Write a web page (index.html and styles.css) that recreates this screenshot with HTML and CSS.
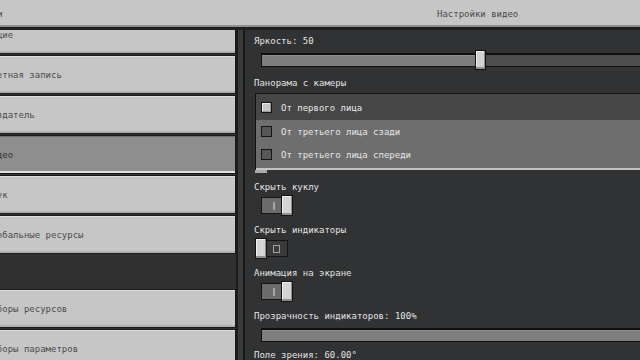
FILE: index.html
```html
<!DOCTYPE html>
<html lang="ru">
<head>
<meta charset="utf-8">
<title>Настройки видео</title>
<link rel="stylesheet" href="styles.css">
</head>
<body>
<div class="screen">
  <header class="topbar">
    <span class="topbar-back">Настройки</span>
    <span class="topbar-title">Настройки видео</span>
  </header>
  <main class="layout">
    <nav class="sidebar">
      <div class="nav-list">
        <div class="nav-group">
          <div class="nav-btn">Общие</div>
          <div class="nav-btn">Учетная запись</div>
          <div class="nav-btn">Создатель</div>
          <div class="nav-btn is-active">Видео</div>
          <div class="nav-btn">Звук</div>
          <div class="nav-btn">Глобальные ресурсы</div>
        </div>
        <div class="nav-group">
          <div class="nav-btn">Наборы ресурсов</div>
          <div class="nav-btn">Наборы параметров</div>
        </div>
      </div>
    </nav>
    <div class="rail"></div>
    <section class="panel">
      <div class="label">Яркость: 50</div>
      <div class="slider">
        <div class="slider-track"><div class="slider-fill" style="width: 214px"></div></div>
        <div class="slider-thumb" style="left: 214px"></div>
      </div>

      <div class="label label-gap">Панорама с камеры</div>
      <div class="dropdown">
        <div class="dd-row is-current"><span class="radio is-checked"></span><span>От первого лица</span></div>
        <div class="dd-list">
          <div class="dd-row"><span class="radio"></span><span>От третьего лица сзади</span></div>
          <div class="dd-row"><span class="radio"></span><span>От третьего лица спереди</span></div>
        </div>
      </div>
      <div class="dd-peek"></div>

      <div class="label label-gap-s">Скрыть куклу</div>
      <div class="toggle is-on">
        <div class="toggle-track"><span class="mark-on"></span></div>
        <div class="toggle-thumb"></div>
      </div>

      <div class="label">Скрыть индикаторы</div>
      <div class="toggle is-off">
        <div class="toggle-track"><span class="mark-off"></span></div>
        <div class="toggle-thumb"></div>
      </div>

      <div class="label">Анимация на экране</div>
      <div class="toggle is-on">
        <div class="toggle-track"><span class="mark-on"></span></div>
        <div class="toggle-thumb"></div>
      </div>

      <div class="label">Прозрачность индикаторов: 100%</div>
      <div class="slider">
        <div class="slider-track"><div class="slider-fill" style="width: 100%"></div></div>
        <div class="slider-thumb" style="left: 420px"></div>
      </div>

      <div class="label label-gap-xs">Поле зрения: 60.00°</div>
    </section>
  </main>
</div>
</body>
</html>
```

FILE: styles.css
```css
* {
  box-sizing: border-box;
  margin: 0;
  padding: 0;
}

html, body {
  width: 640px;
  height: 360px;
  overflow: hidden;
  background: #313233;
}

body {
  font-family: "DejaVu Sans Mono", "Liberation Mono", monospace;
  font-size: 9px;
  line-height: 12px;
}

.screen {
  width: 640px;
  height: 360px;
  display: flex;
  flex-direction: column;
}

/* header */
.topbar {
  display: flex;
  align-items: center;
  height: 27px;
  flex: none;
  padding-top: 2px;
  background: #c6c6c6;
  border-bottom: 2px solid #8e8e8e;
  color: #4a4a4a;
  white-space: nowrap;
}

.topbar-back {
  margin-left: -46px;
  width: 49px;
  flex: none;
}

.topbar-title {
  margin-left: 434px;
}

/* main area */
.layout {
  flex: 1;
  display: flex;
  min-height: 0;
  border-top: 3px solid #202020;
}

.sidebar {
  width: 238px;
  flex: none;
  background: #313131;
  border-right: 2px solid #1b1b1b;
  overflow: hidden;
}

.nav-list {
  margin-top: -15px;
  margin-left: -40px;
}

.nav-group {
  display: flex;
  flex-direction: column;
  gap: 1px;
}

.nav-group + .nav-group {
  margin-top: 35px;
}

.nav-btn {
  height: 39px;
  display: flex;
  align-items: center;
  padding-left: 25px;
  padding-top: 1px;
  background: #c6c6c6;
  border: 1px solid #1a1a1a;
  box-shadow: inset 0 1px #dedede, inset 0 -2px #b0b0b0;
  color: #4c4c4c;
  white-space: nowrap;
}

.nav-btn.is-active {
  background: #8e8e8e;
  box-shadow: inset 0 1px #6e6e6e, inset 0 -2px #e2e2e2;
  color: #333;
}

.rail {
  width: 7px;
  flex: none;
  background: #3a3a3a;
  border-right: 2px solid #161616;
}

/* settings panel */
.panel {
  flex: 1;
  min-width: 0;
  overflow: hidden;
  display: flex;
  flex-direction: column;
  padding: 5px 0 0 9px;
  color: #e2e2e2;
}

.label {
  height: 12px;
  flex: none;
  white-space: nowrap;
}

.label-gap { margin-top: 7px; }
.label-gap-s { margin-top: 8px; }
.label-gap-xs { margin-top: 4px; }

.slider {
  position: relative;
  height: 20px;
  flex: none;
  margin: 3px -30px 0 7px;
}

.slider-track {
  position: absolute;
  left: 0;
  right: 0;
  top: 3px;
  height: 14px;
  background: #4d4d4d;
  border: 1px solid #101010;
  border-top-width: 2px;
}

.slider-fill {
  height: 100%;
  background: #7e7e7e;
  box-shadow: inset 0 1px #8e8e8e;
}

.slider-thumb {
  position: absolute;
  top: 0;
  width: 11px;
  height: 20px;
  background: #d2d2d2;
  border: 1px solid #111;
  box-shadow: inset -1px -2px #8e8e8e, inset 1px 1px #efefef;
}

/* dropdown */
.dropdown {
  flex: none;
  margin: 4px -30px 0 1px;
  border-top: 1px solid #111;
  border-left: 1px solid #111;
}

.dd-row {
  display: flex;
  align-items: center;
  gap: 9px;
  height: 23px;
  padding-left: 5px;
  white-space: nowrap;
  color: #e6e6e6;
}

.dd-row.is-current {
  height: 26px;
  padding-top: 1px;
  background: #474747;
}

.dd-list {
  background: #6e6e6e;
  padding-bottom: 2px;
  border-bottom: 2px solid #c4c4c4;
}

.radio {
  width: 11px;
  height: 11px;
  flex: none;
  background: #585858;
  border: 1px solid #161616;
}

.radio.is-checked {
  background: #c8c8c8;
  box-shadow: inset -1px -1px #9a9a9a, inset 1px 1px #ececec;
}

.dd-peek {
  width: 12px;
  height: 3px;
  flex: none;
  margin-left: 1px;
  background: #a9a9a9;
}

/* toggles */
.toggle {
  position: relative;
  width: 38px;
  height: 21px;
  flex: none;
  margin: 2px 0 8px 1px;
}

.toggle-track {
  position: absolute;
  top: 2px;
  height: 17px;
  display: flex;
  align-items: center;
  background: #6b6b6b;
  border: 1px solid #141414;
}

.toggle.is-on .toggle-track {
  left: 6px;
  right: 0;
}

.toggle.is-off .toggle-track {
  left: 1px;
  right: 5px;
  background: #3a3a3a;
}

.toggle-thumb {
  position: absolute;
  top: 0;
  width: 12px;
  height: 21px;
  background: #d4d4d4;
  border: 1px solid #141414;
  box-shadow: inset -1px -2px #8f8f8f, inset 1px 1px #f0f0f0;
}

.toggle.is-on .toggle-thumb { right: 0; }
.toggle.is-off .toggle-thumb { left: 0; }

.mark-on {
  width: 2px;
  height: 8px;
  margin-left: 11px;
  background: #a6a6a6;
}

.mark-off {
  width: 7px;
  height: 8px;
  margin-left: 16px;
  border: 1px solid #a0a0a0;
}
```
